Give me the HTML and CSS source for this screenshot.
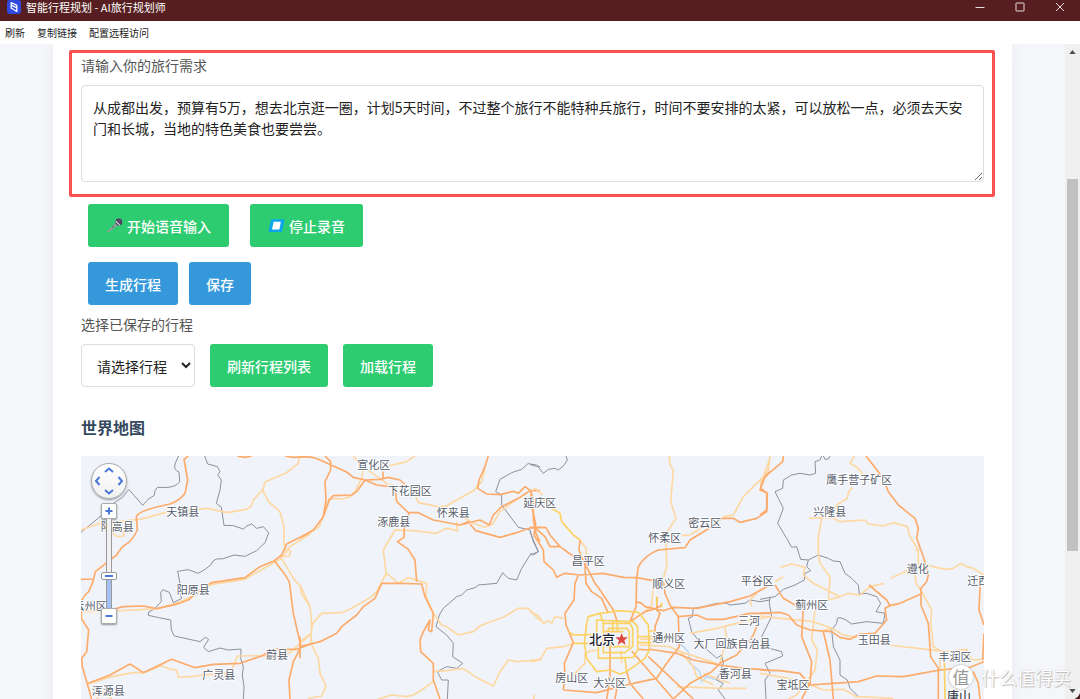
FILE: index.html
```html
<!DOCTYPE html>
<html lang="zh-CN">
<head>
<meta charset="utf-8">
<title>智能行程规划 - AI旅行规划师</title>
<link rel="stylesheet" href="styles.css">
</head>
<body>
<div class="window">
  <header class="titlebar">
    <svg class="app-icon" viewBox="0 0 14 14" aria-hidden="true"><rect width="14" height="14" rx="3" fill="#2f49e0"/><path d="M7.200 9.800L4.200 8.200V2.600L7 4M4.800 5.400L9.800 8V11.400L7.200 10M6.400 3.600L9.800 5.400V8" fill="none" stroke="#fff" stroke-width="1.300" stroke-linejoin="round"/></svg>
    <h1 class="window-title">智能行程规划 - AI旅行规划师</h1>
    <div class="window-controls">
      <button type="button" class="window-button" aria-label="最小化"><svg viewBox="0 0 10 10"><path d="M0.500 5.500H9.500"/></svg></button>
      <button type="button" class="window-button" aria-label="最大化"><svg viewBox="0 0 10 10"><rect x="1" y="1" width="8" height="8" rx="0.500"/></svg></button>
      <button type="button" class="window-button" aria-label="关闭"><svg viewBox="0 0 10 10"><path d="M1 1L9 9M9 1L1 9"/></svg></button>
    </div>
  </header>
  <nav class="menubar">
    <a class="menu-link" href="#refresh">刷新</a>
    <a class="menu-link" href="#copy">复制链接</a>
    <a class="menu-link" href="#remote">配置远程访问</a>
  </nav>
  <div class="viewport">
    <main class="page">
      <div class="card">
        <section class="request">
          <label class="label" for="need">请输入你的旅行需求</label>
          <textarea class="textarea" id="need">从成都出发，预算有5万，想去北京逛一圈，计划5天时间，不过整个旅行不能特种兵旅行，时间不要安排的太紧，可以放松一点，必须去天安门和长城，当地的特色美食也要尝尝。</textarea>
        </section>
        <div class="row row-voice">
          <button type="button" class="button green"><svg class="emoji" viewBox="0 0 17 17" aria-hidden="true"><path d="M1 14.800L10 5.800L12 7.800L2 15.400Z" fill="#9b9a9f"/><path d="M6 10.500L7.800 9" stroke="#5b5860" stroke-width="1"/><circle cx="12.800" cy="5" r="3.400" fill="#4b3a5e"/><path d="M9.700 4L13.800 8.200" stroke="#c8c5cf" stroke-width="1.300"/><path d="M12 3L14.500 5.500M14 2.500L15.300 4" stroke="#79658f" stroke-width="0.800"/></svg>开始语音输入</button>
          <button type="button" class="button green"><svg class="emoji" viewBox="0 0 17 17" aria-hidden="true"><path d="M4.200 2.200H15.200Q16.600 2.200 16.300 3.500L14.200 13.800Q14 15 12.800 15H1.700Q0.400 15 0.700 13.800L2.800 3.400Q3 2.200 4.200 2.200Z" fill="#0ba5ee"/><path d="M5.600 4.800H12.900L11.300 12.400H4Z" fill="#fff"/></svg>停止录音</button>
        </div>
        <div class="row row-plan">
          <button type="button" class="button blue">生成行程</button>
          <button type="button" class="button blue">保存</button>
        </div>
        <label class="label" for="saved">选择已保存的行程</label>
        <div class="row row-saved">
          <select class="select" id="saved"><option>请选择行程</option></select>
          <button type="button" class="button green">刷新行程列表</button>
          <button type="button" class="button green">加载行程</button>
        </div>
        <h2 class="heading">世界地图</h2>
        <div class="map">
          <svg class="map-canvas" viewBox="0 0 2709 729" role="img" aria-label="北京周边地图">
            <g transform="translate(-3 -168)">
              <path class="border" d="M296 168C290 180 283 192 284 205Q288 213 297 216L299 245Q292 255 282 258Q270 264 232 262L225 272L223 286L204 298L188 316L162 286L146 268L128 292L100 310L66 345L3 397"/>
              <path class="border" d="M374 168L383 192Q400 196 412 200L420 215L413 225L424 240L420 270L409 310L424 322L432 376L460 377L490 387L500 378L515 372L530 385L550 380L566 398L555 428L530 452L495 469L462 465L430 476L410 477L400 482L392 495L375 508L355 520L325 509L293 514L300 550L304 596L280 608L268 577L248 569L242 578L244 605L222 628L206 636L205 646L232 652L272 660L274 690L283 708L315 715L360 725L376 712L386 718L371 742L385 755L420 744L445 750L483 747L482 775L490 800L487 825L492 860L490 900"/>
              <path class="road light" d="M3 390L60 370L180 358L255 338L385 325L440 338L500 328L514 318L520 300L548 270L556 245L620 218L655 190L658 168M548 270L565 305L600 335L612 380L612 430L620 460M605 475L640 535L662 560L664 580L690 620M3 635L108 633L235 626L300 606L345 585L395 553L495 538L560 500L600 478L630 440L690 402M25 852L95 830L160 818L190 818L245 797L270 808L290 810L295 832L330 830L370 825L435 820L456 808L472 768L550 767L600 768L630 758L660 730L690 705M98 400L112 410L130 408L133 398L118 396M600 470L628 468L632 452L612 448M50 897L70 875L95 897"/>
              <path class="road" d="M325 168L312 178L323 240L315 280Q300 302 270 312Q220 322 200 330Q175 338 169 350L172 390Q155 425 135 435Q125 440 110 465L46 515L38 548L26 575Q8 590 4 605V655L26 690L20 755L5 775L7 800L35 897M3 538L40 537M108 626L130 620L190 618L230 626L285 614L325 600L365 565L395 548L495 533L540 500L583 482L605 465L620 432L690 397M25 850L90 825L150 792L190 818L275 778L345 803L400 793L480 790L545 768L580 748L650 748L690 733M583 482L612 520L628 545L640 640L663 740L640 785L627 840L630 900M472 168L495 172L515 168M615 168L640 172L690 170"/>
            </g>
            <g transform="translate(657 -18)">
              <path class="border" d="M720 50L700 47L685 40L665 58L635 68L600 88L587 125L605 135L605 165L655 232L690 240L700 275L715 305L690 315L665 355L650 390L625 385L608 368L590 400L535 405L525 413L500 420L485 435L470 440L430 475L418 495L408 530L440 555L460 580L458 620L488 640L470 655L440 650L412 665L425 690L445 690L442 747"/>
              <path class="road light" d="M160 18L190 55L185 85L165 125L150 140L125 147L88 145L70 195L58 230L40 242L0 262M205 62L240 85L265 105L300 108M345 18L320 35L265 48M555 55L545 95L520 122L470 150L435 170L415 170L355 158L347 140M480 195L520 220L555 232L578 222L600 185L640 155L680 130M470 215L472 242L440 235L410 250L340 242L285 240L250 300L258 368L295 400L325 383L380 400L378 440L400 490L425 525L440 530L475 555L520 545L540 528L560 520L610 502L655 475L685 475L720 512M260 368L230 425L215 440L155 475L125 488L65 490L38 520L33 550L0 575M0 405L30 470L35 520L33 580L55 625L60 670L78 708L65 738L25 745M400 665L440 662L490 655L525 680L580 708L600 665L625 630L650 635L690 632L720 628M400 695L365 720L340 735L320 740L275 735L235 747M700 747L705 735"/>
              <path class="road" d="M0 18L38 22L55 28L100 48L140 66L160 82L195 90L240 88L265 82L300 90L320 108M75 18L92 35L92 60L75 95L78 150L70 200L40 240L0 264M70 200L88 150L100 137L155 135L170 125L195 90L230 105L285 112L290 155L325 188L355 188L400 210L480 225L540 210L568 225L580 195L605 170L655 145L690 122L720 122M250 85L248 65M480 225L505 215L527 242L600 262L650 248L690 234L720 232M565 18L555 50L537 90L533 115L560 132L600 134L640 124L655 130L675 110L692 122L700 150L700 210L708 250L720 275M0 590L60 575L110 550L125 530L170 495L190 470L225 445L245 400L305 400L365 402L375 440L400 490L395 545L385 540L390 510L370 545L360 570L362 605L400 640L400 690L420 747M327 190L313 230L312 262L292 275L325 298L345 330L350 395M0 560V625"/>
            </g>
            <g transform="translate(1347 -18)">
              <path class="river" d="M450 580L475 605L480 640L510 665L515 695L530 680L560 690"/>
              <path class="border" d="M0 42L20 45L40 70L55 58L75 55L85 60L100 48L112 30L108 18M0 245L10 270L25 305L10 315L0 310M720 450L690 455L660 450L645 460L600 465L590 460L560 460L520 470L490 475L487 500L475 505L485 545L520 590L550 615L560 625L575 615L580 640L560 690L580 700L565 720L585 747"/>
              <path class="road light" d="M150 270L168 295L170 340M0 125L15 115L38 135M0 485L25 497L40 520L55 512L65 520L75 500L100 505M0 635L30 630L50 595L100 590L135 578M418 18L420 45L430 60L422 155L438 205L415 240L408 270L410 350L400 385L370 410L365 465L340 490L300 515M720 25L700 80L640 140L610 195L580 200M455 257L480 255L520 230M480 550L560 535L640 515L720 500M585 530L590 565L570 640M665 470L660 450L680 430M330 585L420 590L450 605L490 650L500 680L550 705M440 710L580 715L650 715M520 670L600 700M450 605L560 640M165 610L165 640L115 690M200 600L175 605L165 615M273 600L275 640M330 568L370 566"/>
              <path class="road" d="M0 232L48 233L60 255L90 290L120 312L165 335M3 120L5 170L17 220L12 255L40 300L42 335L70 360L80 382L105 370L150 375L220 370L280 382L320 383L370 392M17 235L45 260L60 290L90 290M150 270L147 300L165 345L168 400L185 425L215 445L235 490M165 340L195 400L210 420L250 480L262 515M145 375L135 400L132 450L105 490L108 525L130 578L103 640L105 680L100 720M300 515L318 470L320 385L325 350Q345 315 385 300L465 293L480 270L545 230L575 205L610 205L630 217L680 205L710 185L712 130L692 115L697 90L720 65M400 395L405 430L420 465L445 500L448 590L410 640L380 685L310 700M318 455L335 460L345 470L400 482L430 472L500 475L600 455L660 438L720 405M300 515L345 485L380 475L395 465M382 440L380 480L390 490L375 530L375 555M445 500L500 495L530 508L580 508L660 490L720 490M355 597L440 610L490 630L570 645L640 655L720 660M325 598L360 600M305 603L430 747M355 620L490 747M290 665L300 700L340 747M430 747L480 700L545 665L570 640L620 615L670 555L680 530M100 720L200 728L290 705L380 685M240 580V690L230 747M265 690L255 747"/>
              <path class="road ring" d="M35 145L65 175L90 190L95 215L130 255L150 270M175 500L210 490L270 482L325 487L355 525L358 600L345 625L290 665L270 672L240 660L200 665L170 625L163 580L170 520ZM200 510L310 515L323 530V600L310 622L205 625V595L200 560ZM220 520H300L308 535V590L285 608H220ZM235 535H290L298 545V590H235ZM248 510V545M262 515V545M220 545H280M115 545L130 555L200 553M130 580H220M325 560H370M325 578H370M210 490L220 520M285 625L290 665M380 440V465M395 458V472M355 543H375"/>
            </g>
            <g transform="translate(2037 -18)">
              <path class="border" d="M210 18L205 27L195 28L190 18M185 18L180 30L165 35L167 70L150 75L120 70L95 75L70 90L68 115L45 125L55 145L70 175L53 220L80 265L95 292L110 290L122 328L145 330L140 350L152 362L135 370L133 390L105 405L70 418L45 440L0 448M145 330L175 315L205 325L220 333L240 335L255 370L275 385L295 405L298 432L320 430L350 440L362 460L348 485L375 490L370 520L320 515L275 522L255 508L240 503L232 505L230 520L215 540L220 590L240 630L240 675L262 690L270 715L298 742M30 440L28 460L35 500L5 560L10 590L65 605L68 618L15 640L30 670L15 690L18 747"/>
              <path class="road light" d="M30 18L25 60L0 100M0 498L60 505L160 515L215 535L250 555L290 562M0 670L85 685L130 695L190 720L250 718L290 740L400 745M283 18L270 40L290 50L310 75M278 112L266 125L262 145L230 165L215 190M148 205L215 202L240 215L315 210L325 222L370 228L400 218L442 230L450 260L475 300L475 345M185 205L175 260L175 310L180 340L210 380L205 450L240 440M62 352L95 342L135 352L130 375L160 400L240 440L265 430L300 435L330 410L372 400M392 385L440 362M500 345L555 358L580 355L602 340L620 350L640 355L672 375M465 370L468 400L485 425L515 480L512 520L520 590L545 605M385 585L500 598L560 605L620 598L635 630L672 628M165 480L155 570L172 600L165 660L140 695L110 735L85 747M540 620V660M588 747L592 700L600 650M45 395L70 380M215 535L180 545M465 300H480"/>
              <path class="road" d="M70 18L68 35L15 80L0 120L20 128L20 180L0 195M318 18L355 65L375 100L385 125L415 165L465 205L475 235L470 265L490 320L505 375L500 395L483 415L483 465L505 520L512 620L535 655L535 747M483 432L420 460L390 467L380 450L327 405M390 467L375 475L380 510L345 550L300 552L270 568L240 562L215 545L150 540L110 525L85 495L60 487L0 490M45 405L70 445L105 465L130 470L125 560L155 635L150 700L125 747M190 545L210 630L220 747M0 660L60 662L120 670L150 705L220 700L295 695L350 678L430 680L540 660L630 652L672 635M660 410L657 480L672 525M672 550L668 630M640 665L655 700L660 747"/>
              <path class="road ring" d="M553 630L555 747"/>
            </g>
            <g class="places" transform="translate(-3 -168)">
              <text x="308" y="347">天镇县</text><text x="112" y="392">阳高县</text><text x="340" y="583">阳原县</text><text x="31" y="630">云州区</text><text x="591" y="778">蔚县</text><text x="416" y="838">广灵县</text><text x="85" y="886">浑源县</text>
            </g>
            <g class="places" transform="translate(657 -18)">
              <text x="221" y="57">宣化区</text><text x="329" y="136">下花园区</text><text x="460" y="202">怀来县</text><text x="281" y="227">涿鹿县</text>
            </g>
            <g class="places" transform="translate(1347 -18)">
              <text x="29" y="170">延庆区</text><text x="524" y="230">密云区</text><text x="404" y="275">怀柔区</text><text x="175" y="346">昌平区</text><text x="416" y="413">顺义区</text><text x="682" y="405">平谷区</text><text x="657" y="524">三河</text><text x="416" y="575">通州区</text><text x="606" y="594">大厂回族自治县</text><text x="616" y="685">香河县</text><text x="125" y="696">房山区</text><text x="239" y="711">大兴区</text>
              <text class="city" x="216" y="583">北京</text>
              <path d="M275 549L280 562H294L283 571L287 585L275 577L263 585L267 571L256 562H270Z" fill="#dc4b42" stroke="#fff" stroke-width="2"/>
            </g>
            <g class="places" transform="translate(2037 -18)">
              <text x="298" y="103">鹰手营子矿区</text><text x="209" y="199">兴隆县</text><text x="473" y="369">遵化</text><text x="655" y="405">迁西</text><text x="155" y="476">蓟州区</text><text x="343" y="583">玉田县</text><text x="585" y="633">丰润区</text><text x="99" y="718">宝坻区</text>
              <text class="town" x="597" y="754">唐山</text>
            </g>
          </svg>
          <div class="map-controls">
            <div class="pan">
              <button type="button" class="pan-button up" aria-label="向上平移"><svg viewBox="0 0 10 10"><path d="M1 7L5 3.500L9 7"/></svg></button>
              <button type="button" class="pan-button left" aria-label="向左平移"><svg viewBox="0 0 10 10"><path d="M6.500 1L3 5L6.500 9"/></svg></button>
              <button type="button" class="pan-button right" aria-label="向右平移"><svg viewBox="0 0 10 10"><path d="M3.500 1L7 5L3.500 9"/></svg></button>
              <button type="button" class="pan-button down" aria-label="向下平移"><svg viewBox="0 0 10 10"><path d="M1 3L5 6.500L9 3"/></svg></button>
            </div>
            <button type="button" class="zoom-button" aria-label="放大"><svg viewBox="0 0 10 10"><path d="M1.500 5H8.500M5 1.500V8.500"/></svg></button>
            <input class="zoom-range" type="range" min="0" max="100" value="34" aria-label="缩放级别">
            <button type="button" class="zoom-button" aria-label="缩小"><svg viewBox="0 0 10 10"><path d="M1.500 5H8.500"/></svg></button>
          </div>
        </div>
      </div>
    </main>
    <div class="scrollbar" aria-hidden="true">
      <svg class="arrow" viewBox="0 0 8 5"><path d="M4 0L8 5H0Z" fill="#505050"/></svg>
      <div class="track"><div class="thumb"></div></div>
      <svg class="arrow" viewBox="0 0 8 5"><path d="M0 0H8L4 5Z" fill="#505050"/></svg>
    </div>
  </div>
  <div class="watermark"><span class="watermark-badge">值</span><span>什么值得买</span></div>
</div>
</body>
</html>
```
FILE: styles.css
```css
* {
  box-sizing: border-box;
}

html {
  background: #4a2024;
}

body {
  margin: 0;
  font-family: "Noto Sans CJK SC", sans-serif;
  font-size: 14px;
}

button,
select,
textarea {
  font: inherit;
}

.window {
  position: relative;
  display: flex;
  flex-direction: column;
  height: 100vh;
  overflow: hidden;
  border-bottom-right-radius: 8px;
  background: #fff;
}

.titlebar {
  display: flex;
  flex: none;
  align-items: flex-start;
  height: 21px;
  padding-left: 7px;
  background: #561e21;
}

.app-icon {
  width: 14px;
  height: 14px;
  margin-right: 5px;
}

.window-title {
  flex: 1;
  margin: 0;
  color: #fff;
  font-size: 11px;
  font-weight: 400;
  line-height: 15px;
}

.window-controls {
  display: flex;
}

.window-button {
  display: grid;
  place-items: center;
  width: 40px;
  height: 14px;
  padding: 0;
  border: 0;
  background: none;
}

.window-button svg {
  width: 10px;
  height: 10px;
  fill: none;
  stroke: #e8dcdc;
}

.menubar {
  display: flex;
  flex: none;
  align-items: center;
  gap: 12px;
  height: 23px;
  padding: 0 5px;
}

.menu-link {
  color: #222;
  font-size: 10px;
  line-height: 16px;
  text-decoration: none;
}

.viewport {
  display: flex;
  flex: 1;
  min-height: 0;
}

.page {
  flex: 1;
  min-width: 0;
  overflow: hidden;
  padding: 0 53px;
  background: #f5f6fa;
}

.card {
  padding: 9px 28px 28px;
  background: #fff;
  box-shadow: 0 0 14px rgba(0, 0, 0, 0.05);
}

.request {
  position: relative;
}

.request::after {
  content: "";
  position: absolute;
  inset: -3px -11px -15px -12px;
  border: 3px solid #fa5252;
  border-radius: 2px;
  pointer-events: none;
}

.label {
  display: block;
  margin-bottom: 8px;
  color: #555;
  line-height: 24px;
}

.textarea {
  display: block;
  width: 100%;
  height: 97px;
  padding: 11px;
  border: 1px solid #ddd;
  border-radius: 4px;
  background: #fff;
  color: #222;
  line-height: 21px;
  resize: vertical;
}

.row {
  display: flex;
  flex-wrap: wrap;
}

.row-voice {
  gap: 21px;
  margin: 22px 0 15px;
  padding-left: 7px;
}

.row-plan {
  gap: 11px;
  margin-bottom: 7px;
  padding-left: 7px;
}

.row-saved {
  gap: 15px;
}

.button {
  display: flex;
  align-items: center;
  gap: 4px;
  height: 43px;
  padding: 0 17px;
  border: 0;
  border-radius: 3px;
  color: #fff;
  font-weight: 500;
}

.row-voice .button {
  padding: 0 18px;
}

.green {
  background: #2ecc71;
}

.blue {
  background: #3498db;
}

.emoji {
  width: 17px;
  height: 17px;
}

.select {
  width: 114px;
  height: 43px;
  padding: 0 0 0 11px;
  border: 1px solid #ddd;
  border-radius: 4px;
  background: #fff;
  color: #222;
}

.heading {
  margin: 28px 0 17px;
  color: #34495e;
  font-size: 16px;
  font-weight: 700;
  line-height: 24px;
}

.map {
  position: relative;
  overflow: hidden;
  background: #f0f3fa;
}

.map-canvas {
  display: block;
  width: 100%;
}

.border,
.road,
.river {
  fill: none;
  stroke-linejoin: round;
}

.border {
  stroke: #8d919b;
  stroke-width: 3px;
}

.river {
  stroke: #bcdcf4;
  stroke-width: 5px;
}

.road {
  stroke: #fdab6b;
  stroke-width: 5px;
}

.road.light {
  stroke: #fdd8a2;
}

.road.ring {
  stroke: #fcd262;
}

.places {
  fill: #555b6b;
  stroke: #fff;
  stroke-width: 6px;
  stroke-linejoin: round;
  paint-order: stroke;
  font-size: 33px;
  text-anchor: middle;
}

.city {
  fill: #1d2230;
  font-size: 39px;
  font-weight: 500;
}

.town {
  fill: #3a3f4d;
  font-size: 36px;
  font-weight: 500;
}

.map-controls {
  position: absolute;
  top: 7px;
  left: 10px;
  display: flex;
  flex-direction: column;
  align-items: center;
}

.pan {
  display: grid;
  grid-template-areas: ". up ." "left . right" ". down .";
  width: 36px;
  height: 36px;
  margin-bottom: 4px;
  padding: 1px;
  border: 1px solid #aaa;
  border-radius: 50%;
  background: linear-gradient(#fff, #f1f1f1);
  box-shadow: 0 1px 2px rgba(0, 0, 0, 0.4);
}

.pan-button {
  display: grid;
  place-items: center;
  padding: 0;
  border: 0;
  background: none;
}

.up {
  grid-area: up;
}

.left {
  grid-area: left;
}

.right {
  grid-area: right;
}

.down {
  grid-area: down;
}

.pan-button svg,
.zoom-button svg {
  width: 10px;
  height: 10px;
  fill: none;
  stroke: #4a78d8;
  stroke-width: 2px;
}

.zoom-button {
  display: grid;
  place-items: center;
  width: 16px;
  height: 16px;
  padding: 0;
  border: 1px solid #aaa;
  border-radius: 2px;
  background: #fff;
  box-shadow: 0 1px 2px rgba(0, 0, 0, 0.4);
}

.zoom-range {
  width: 16px;
  height: 89px;
  margin: 0;
  appearance: none;
  background: none;
  writing-mode: vertical-lr;
  direction: rtl;
}

.zoom-range::-webkit-slider-runnable-track {
  width: 6px;
  height: 100%;
  border: solid #999;
  border-width: 0 1px;
  background: linear-gradient(#f1f1f1 66%, #a5c0f5 66%);
}

.zoom-range::-webkit-slider-thumb {
  width: 16px;
  height: 8px;
  margin-left: -6px;
  appearance: none;
  border: 1px solid #999;
  border-radius: 2px;
  background: linear-gradient(#4a78d8, #4a78d8) center / 8px 2px no-repeat #fff;
}

.scrollbar {
  display: flex;
  flex: none;
  flex-direction: column;
  align-items: center;
  width: 15px;
  padding: 6px 0;
  background: #f0f0f0;
}

.arrow {
  width: 7px;
  height: 4px;
}

.track {
  flex: 1;
  width: 11px;
  padding-top: 125px;
}

.thumb {
  height: 73%;
  background: #c1c1c1;
}

.watermark {
  position: absolute;
  right: 9px;
  bottom: 9px;
  display: flex;
  align-items: center;
  gap: 8px;
  color: #fff;
  font-size: 18px;
  line-height: 26px;
  text-shadow: 0 0 1px #bbb, 1px 1px 1px #bbb;
}

.watermark-badge {
  width: 24px;
  height: 24px;
  border-radius: 50%;
  background: #fff;
  box-shadow: 0 0 2px #999;
  color: #999;
  font-size: 17px;
  line-height: 23px;
  text-align: center;
  text-shadow: none;
}
```
